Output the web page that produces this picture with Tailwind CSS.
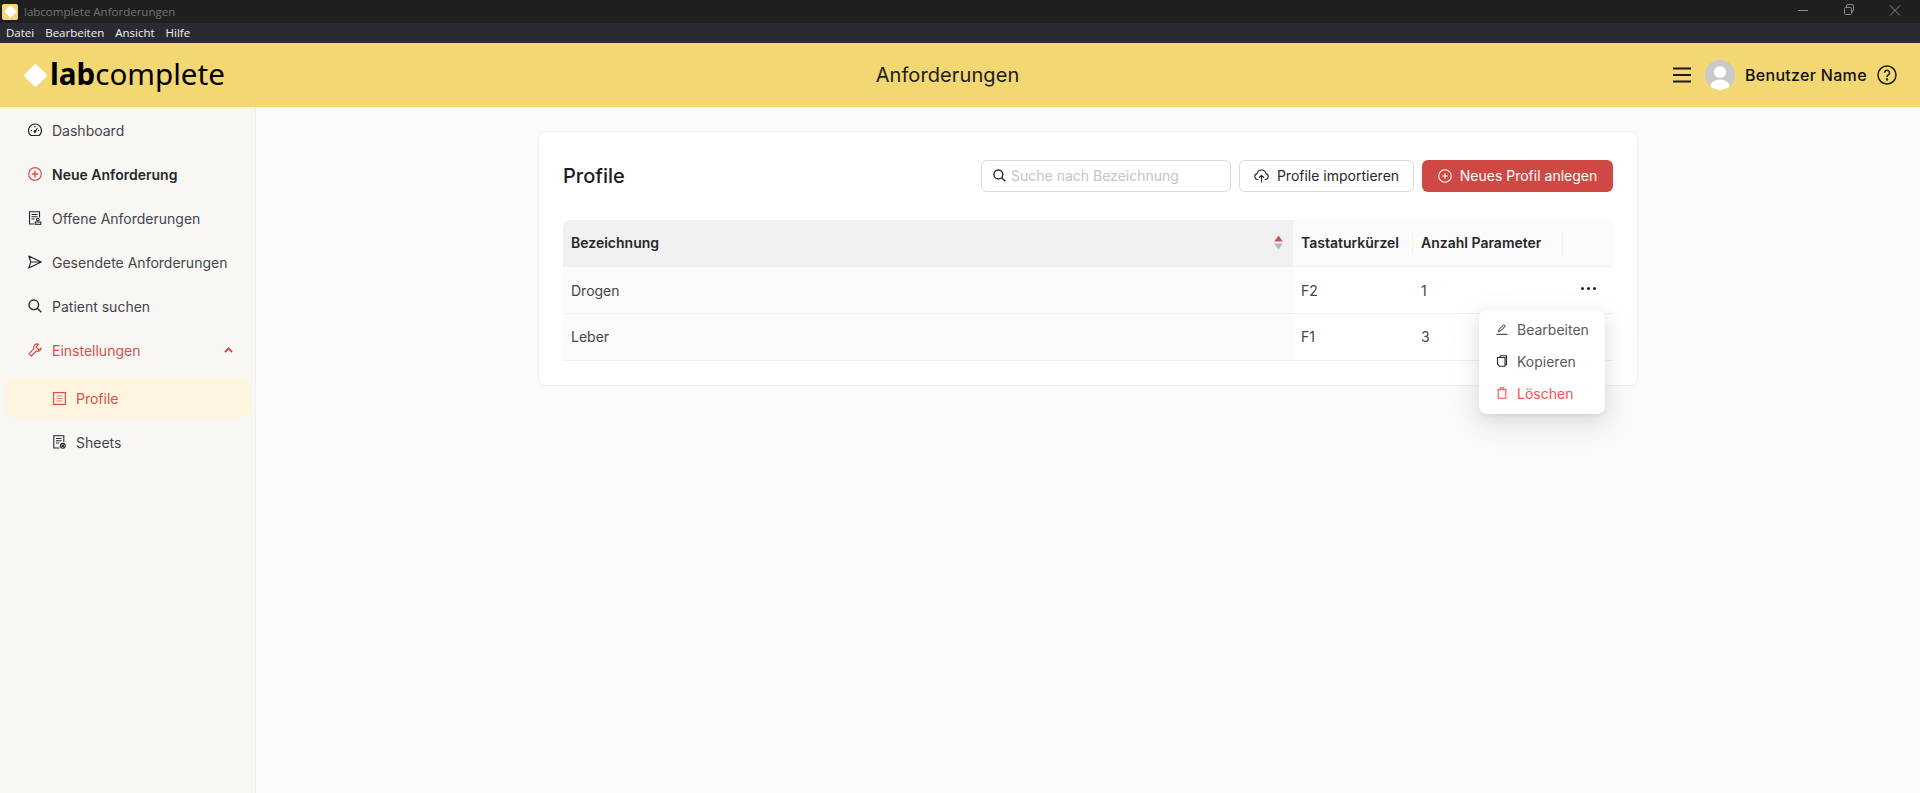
<!DOCTYPE html>
<html lang="de">
<head>
    <meta charset="UTF-8">
    <title>labcomplete Anforderungen</title>
    <script src="https://cdn.jsdelivr.net/npm/@tailwindcss/browser@4"></script>
</head>
<body class="h-screen flex flex-col overflow-hidden bg-[#fafafa] font-['Inter',sans-serif] text-[14px] text-[#44444c]">
    <!-- window title bar -->
    <div class="h-[23px] bg-[#1f1f1f] flex items-center shrink-0 relative">
        <div class="ml-[2px] w-4 h-4 bg-[#f3d875] rounded-[2px] flex items-center justify-center">
            <div class="w-[9px] h-[9px] bg-white rotate-45 rounded-[1px]"></div>
        </div>
        <span class="ml-[6px] text-[11.5px] text-[#757575] font-['Open_Sans',sans-serif]">labcomplete Anforderungen</span>
        <div class="ml-auto mr-[2px] flex items-center text-[#8a8a8a]">
            <svg class="w-[46px] h-[23px]" viewBox="0 0 46 23" fill="none" stroke="currentColor"><path d="M18 10.500h10"/></svg>
            <svg class="w-[46px] h-[23px]" viewBox="0 0 46 23" fill="none" stroke="currentColor"><rect x="18.500" y="7.500" width="7" height="7" rx="1"/><path d="M20.500 7.500V6a1.500 1.500 0 0 1 1.500-1.500h4A1.500 1.500 0 0 1 27.500 6v4a1.500 1.500 0 0 1-1.500 1.500h-.5"/></svg>
            <svg class="w-[46px] h-[23px]" viewBox="0 0 46 23" fill="none" stroke="currentColor"><path d="M18 5.500l10 10M28 5.500l-10 10"/></svg>
        </div>
    </div>
    <!-- menu bar -->
    <div class="h-5 bg-[#2a2b30] flex items-center shrink-0 pl-[6px] gap-[11px] text-[11.5px] text-[#f2f2f2] font-['Open_Sans',sans-serif]">
        <span>Datei</span><span>Bearbeiten</span><span>Ansicht</span><span>Hilfe</span>
    </div>
    <!-- header -->
    <header class="h-[64px] bg-[#f2d773] flex items-center shrink-0 relative text-black">
        <div class="flex items-center pl-[27px] w-[256px]">
            <div class="w-[17px] h-[17px] bg-white rotate-45 rounded-[2px]"></div>
            <div class="ml-[6px] text-[29.6px] leading-none font-['Noto_Sans',sans-serif] pb-[3px]"><span class="font-bold">lab</span>complete</div>
        </div>
        <h1 class="flex-1 text-center text-[20px] font-normal text-[#1c1c1c] tracking-[0.1px] pr-[34px]">Anforderungen</h1>
        <div class="flex items-center w-[247px]">
            <svg class="w-[18px] h-[16px]" viewBox="0 0 18 16" fill="none" stroke="#1c1c1c" stroke-width="1.800"><path d="M0 1.500h18M0 8h18M0 14.500h18"/></svg>
            <div class="ml-[14px] w-[30px] h-[30px] rounded-full bg-[#c9c9c9] overflow-hidden">
                <svg class="w-[30px] h-[30px]" viewBox="0 0 30 30" fill="white"><circle cx="15" cy="12" r="6"/><ellipse cx="15" cy="27" rx="10" ry="7.500"/></svg>
            </div>
            <span class="ml-[10px] text-[16px] font-medium text-[#111] tracking-[0.3px]">Benutzer Name</span>
            <svg class="ml-[10px] w-5 h-5" viewBox="0 0 20 20" fill="none" stroke="#1c1c1c" stroke-width="1.500"><circle cx="10" cy="10" r="9"/><path d="M7.500 7.800a2.500 2.500 0 1 1 3.800 2.100c-.9.6-1.300 1-1.300 2"/><circle cx="10" cy="14.600" r=".5" fill="#1c1c1c"/></svg>
        </div>
    </header>
    <div class="flex-1 flex min-h-0">
        <!-- sidebar -->
        <aside class="w-[256px] shrink-0 bg-[#f8f7f4] border-r border-[#f0f0f0] pt-[3px] flex flex-col gap-[4px]">
            <div class="h-10 flex items-center pl-[28px]">
                <svg class="w-[14px] h-[14px] mr-[10px]" viewBox="0 0 14 14" fill="none" stroke="#27272a" stroke-width="1.200"><path d="M2.850 12.500A6.500 6.500 0 1 1 11.150 12.500z"/><path d="M7 8.500l2.500-3.500M2.800 7.500h1.200M10 7.500h1.200M7 3v1.200"/><circle cx="7" cy="8.500" r=".8"/></svg>
                <span>Dashboard</span>
            </div>
            <div class="h-10 flex items-center pl-[28px]">
                <svg class="w-[14px] h-[14px] mr-[10px]" viewBox="0 0 14 14" fill="none" stroke="#d4524e" stroke-width="1.200"><circle cx="7" cy="7" r="6.300"/><path d="M7 3.800v6.400M3.800 7h6.400" stroke-width="1.500"/></svg>
                <span class="font-semibold text-[#27272a]">Neue Anforderung</span>
            </div>
            <div class="h-10 flex items-center pl-[28px]">
                <svg class="w-[14px] h-[14px] mr-[10px]" viewBox="0 0 14 14" fill="none" stroke="#27272a" stroke-width="1.100"><path d="M6 13H1.500V.8h10V6.500"/><path d="M3.500 3.500h6M3.500 5.800h6M3.500 8h3"/><circle cx="9.800" cy="8.500" r="1.300"/><rect x="7.300" y="11" width="5.500" height="2.300"/></svg>
                <span>Offene Anforderungen</span>
            </div>
            <div class="h-10 flex items-center pl-[28px]">
                <svg class="w-[14px] h-[14px] mr-[10px]" viewBox="0 0 14 14" fill="none" stroke="#27272a" stroke-width="1.100" stroke-linejoin="round"><path d="M.8 1l12.500 6L.8 13l2-6zM2.800 7h10.500"/></svg>
                <span>Gesendete Anforderungen</span>
            </div>
            <div class="h-10 flex items-center pl-[28px]">
                <svg class="w-[14px] h-[14px] mr-[10px]" viewBox="0 0 14 14" fill="none" stroke="#27272a" stroke-width="1.400"><circle cx="5.800" cy="5.800" r="4.800"/><path d="M9.300 9.300l4 4"/></svg>
                <span>Patient suchen</span>
            </div>
            <div class="h-10 flex items-center pl-[28px] pr-[22px] text-[#d4524e]">
                <svg class="w-[14px] h-[14px] mr-[10px]" viewBox="0 0 14 14" fill="none" stroke="currentColor" stroke-width="1.200" stroke-linejoin="round"><path d="M9 .8a3.500 3.500 0 0 0-3 4.900L1 10.700 3.300 13l5-5a3.500 3.500 0 0 0 4.900-3L11 7 8 4l2.500-2.700C10.100 1 9.600.8 9 .8z"/></svg>
                <span>Einstellungen</span>
                <svg class="ml-auto w-[9px] h-[6px]" viewBox="0 0 9 6" fill="none" stroke="currentColor" stroke-width="2"><path d="M1 5l3.500-3.500L8 5"/></svg>
            </div>
            <div class="mt-[4px] mx-[4px] h-10 rounded-[10px] bg-[#fff5df] flex items-center pl-[49px] text-[#d4524e]">
                <svg class="w-[13px] h-[13px] mr-[10px]" viewBox="0 0 13 13" fill="none" stroke="currentColor"><rect x=".6" y=".6" width="11.800" height="11.800" stroke-width="1.200"/><path d="M3.500 4h6M3.500 6.500h6M3.500 9h6" stroke-width="1" opacity=".7"/></svg>
                <span>Profile</span>
            </div>
            <div class="h-10 flex items-center pl-[53px]">
                <svg class="w-[13px] h-[14px] mr-[10px]" viewBox="0 0 13 14" fill="none" stroke="#27272a" stroke-width="1.100"><path d="M6.500 13H.8V.8h10V7"/><path d="M3 3.500h5.500M3 5.800h5.500M3 8h3"/><circle cx="9.800" cy="10.800" r="2.400" fill="#f8f7f4"/><path d="M8.600 9.600l2.400 2.400M11 9.600L8.600 12"/></svg>
                <span>Sheets</span>
            </div>
        </aside>
        <!-- content -->
        <main class="flex-1 flex justify-center items-start pt-[24px] min-w-0">
            <section class="relative w-[1100px] h-[255px] bg-white rounded-[8px] border border-[#f0f0f0] px-[24px]">
                <div class="flex items-center h-[88px] pb-[1px]">
                    <h2 class="text-[20px] font-medium text-[#1c1c1e]">Profile</h2>
                    <div class="ml-auto flex items-center gap-[8px]">
                        <div class="w-[250px] h-[32px] border border-[#d9d9d9] rounded-[6px] flex items-center px-[11px]">
                            <svg class="w-[13px] h-[13px] mr-[5px]" viewBox="0 0 14 14" fill="none" stroke="#27272a" stroke-width="1.500"><circle cx="5.800" cy="5.800" r="4.800"/><path d="M9.300 9.300l4 4"/></svg>
                            <span class="text-[#c4c4c4]">Suche nach Bezeichnung</span>
                        </div>
                        <button class="w-[175px] h-[32px] border border-[#d9d9d9] rounded-[6px] flex items-center justify-center text-[#27272a]">
                            <svg class="w-[15px] h-[14px] mr-[8px]" viewBox="0 0 15 14" fill="none" stroke="#27272a" stroke-width="1.100" stroke-linecap="round" stroke-linejoin="round"><path d="M4 10.500H3.500a3 3 0 0 1-.4-5.900 4.500 4.500 0 0 1 8.800 0 3 3 0 0 1-.4 5.900H11"/><path d="M7.500 13V6.500M5.300 8.500l2.200-2.200 2.200 2.200"/></svg>
                            Profile importieren
                        </button>
                        <button class="w-[191px] h-[32px] rounded-[6px] bg-[#cf4944] text-white flex items-center justify-center">
                            <svg class="w-[14px] h-[14px] mr-[8px]" viewBox="0 0 14 14" fill="none" stroke="white" stroke-width="1.100"><circle cx="7" cy="7" r="6.300"/><path d="M7 4.200v5.600M4.200 7h5.600"/></svg>
                            Neues Profil anlegen
                        </button>
                    </div>
                </div>
                <table class="table-fixed w-[1050px] border-collapse">
                    <colgroup><col class="w-[730px]"><col class="w-[120px]"><col class="w-[150px]"><col class="w-[50px]"></colgroup>
                    <thead>
                        <tr class="h-[46px] border-b border-[#f0f0f0] text-left text-[#27272a]">
                            <th class="bg-[#f0f0f0] rounded-tl-[8px] px-[8px] font-semibold">
                                <div class="flex items-center justify-between pr-[2px]">
                                    <span>Bezeichnung</span>
                                    <svg class="w-[9px] h-[15px]" viewBox="0 0 8 14"><path d="M4 .5L8 6H0z" fill="#d4524e"/><path d="M4 13.500L0 8h8z" fill="#b5b5b5"/></svg>
                                </div>
                            </th>
                            <th class="bg-[#fafafa] px-[8px] font-semibold relative">Tastaturkürzel<span class="absolute right-0 top-[12px] h-[22px] w-px bg-[#f0f0f0]"></span></th>
                            <th class="bg-[#fafafa] px-[8px] font-semibold relative">Anzahl Parameter<span class="absolute right-0 top-[12px] h-[22px] w-px bg-[#f0f0f0]"></span></th>
                            <th class="bg-[#fafafa] rounded-tr-[8px]"></th>
                        </tr>
                    </thead>
                    <tbody>
                        <tr class="h-[47px] border-b border-[#f0f0f0]">
                            <td class="bg-[#fafafa] px-[8px] pt-[1px]">Drogen</td>
                            <td class="px-[8px] pt-[1px]">F2</td>
                            <td class="px-[8px] pt-[1px]">1</td>
                            <td class="text-center"><div class="flex gap-[3px] justify-center pb-[2px]"><i class="w-[3px] h-[3px] rounded-full bg-[#1c1c1e]"></i><i class="w-[3px] h-[3px] rounded-full bg-[#1c1c1e]"></i><i class="w-[3px] h-[3px] rounded-full bg-[#1c1c1e]"></i></div></td>
                        </tr>
                        <tr class="h-[47px] border-b border-[#f0f0f0]">
                            <td class="bg-[#fafafa] px-[8px]">Leber</td>
                            <td class="px-[8px]">F1</td>
                            <td class="px-[8px]">3</td>
                            <td></td>
                        </tr>
                    </tbody>
                </table>
                <!-- action dropdown -->
                <div class="absolute left-[940px] top-[178px] w-[126px] h-[104px] bg-white rounded-[8px] shadow-[0_6px_16px_0_rgba(0,0,0,0.08),0_3px_6px_-4px_rgba(0,0,0,0.12),0_9px_28px_8px_rgba(0,0,0,0.05)] px-[4px] pt-[3px]">
                    <div class="h-8 flex items-center pl-[13px] text-[#595959]">
                        <svg class="w-[12px] h-[12px] mr-[9px]" viewBox="0 0 12 12" fill="none" stroke="#27272a" stroke-width="1"><path d="M2.500 8.500l.7-2.200L7.800 1.700l1.500 1.500-4.600 4.600zM.5 11.300h11"/></svg>
                        Bearbeiten
                    </div>
                    <div class="h-8 flex items-center pl-[13px] text-[#595959]">
                        <svg class="w-[12px] h-[12px] mr-[9px]" viewBox="0 0 12 12" fill="none" stroke="#27272a" stroke-width="1.100"><path d="M4 .8h6.500v9H9"/><path d="M4 .8v1.700H1.500V9L3.500 11.300H9V2.500H4"/></svg>
                        Kopieren
                    </div>
                    <div class="h-8 flex items-center pl-[13px] text-[#ff4d4f]">
                        <svg class="w-[12px] h-[12px] mr-[9px]" viewBox="0 0 12 12" fill="none" stroke="currentColor" stroke-width="1.100"><path d="M1 2.800h10M2.200 2.800v8.500h7.600V2.800M4.200 2.800V.9h3.600v1.900"/></svg>
                        Löschen
                    </div>
                </div>
            </section>
        </main>
    </div>
</body>
</html>
